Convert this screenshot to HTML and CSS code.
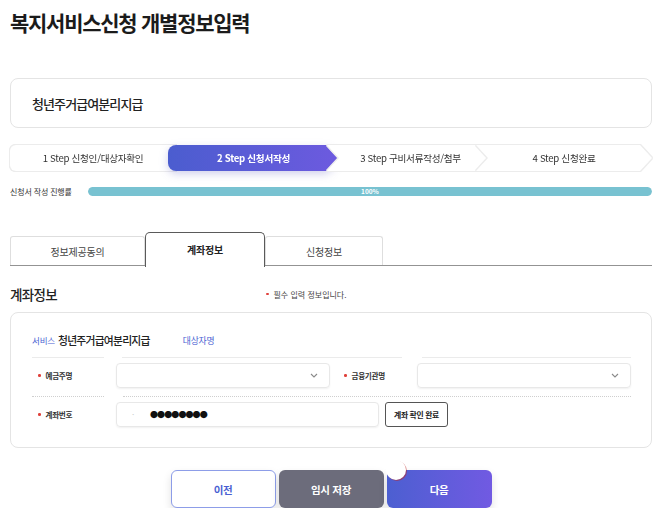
FILE: index.html
```html
<!DOCTYPE html>
<html lang="ko">
<head>
  <meta charset="UTF-8" />
  <meta name="viewport" content="width=device-width, initial-scale=1.0"/>
  <title>복지서비스신청 개별정보입력</title>
  <link rel="stylesheet" href="styles.css">
</head>
<body>

<div class="page">
  <h1 class="title">복지서비스신청 개별정보입력</h1>

  <div class="service-box">청년주거급여분리지급</div>

  <!-- Step indicator -->
  <ol class="steps">
    <li class="step step-first"><span>1 Step 신청인/대상자확인</span></li>
    <li class="step step-active"><span>2 Step 신청서작성</span></li>
    <li class="step step-mid"><span>3 Step 구비서류작성/첨부</span></li>
    <li class="step step-mid step-last"><span>4 Step 신청완료</span></li>
  </ol>

  <div class="progress">
    <span class="progress-label">신청서 작성 진행률</span>
    <div class="progress-bar">
      <div class="progress-fill" style="width: 100%">100%</div>
    </div>
  </div>

  <!-- Tabs -->
  <div class="tabs">
    <div class="tab">정보제공동의</div>
    <div class="tab active">계좌정보</div>
    <div class="tab">신청정보</div>
  </div>

  <div class="section-head">
    <h2>계좌정보</h2>
    <p class="note"><i class="dot"></i>필수 입력 정보입니다.</p>
  </div>

  <div class="card">
    <div class="svc-line">
      <span class="blue">서비스</span>
      <strong>청년주거급여분리지급</strong>
      <span class="blue target">대상자명</span>
    </div>

    <div class="rule">
      <span class="seg-a"></span><span class="seg-b"></span><span class="seg-c"></span>
    </div>

    <div class="form-row">
      <label class="field-label"><i class="dot"></i>예금주명</label>
      <div class="select">
        <svg width="8" height="5" viewBox="0 0 8 5"><polyline points="1,1 4,4 7,1" fill="none" stroke="#8a8a8a" stroke-width="1.1"/></svg>
      </div>
      <label class="field-label"><i class="dot"></i>금융기관명</label>
      <div class="select">
        <svg width="8" height="5" viewBox="0 0 8 5"><polyline points="1,1 4,4 7,1" fill="none" stroke="#8a8a8a" stroke-width="1.1"/></svg>
      </div>
    </div>

    <div class="rule dotted">
      <span class="seg-a"></span><span class="seg-d"></span>
    </div>

    <div class="form-row">
      <label class="field-label"><i class="dot"></i>계좌번호</label>
      <div class="input"><span class="mark">·</span><span class="secret">●●●●●●●●</span></div>
      <button class="btn-check">계좌 확인 완료</button>
    </div>
  </div>

  <div class="actions">
    <button class="btn btn-prev">이전</button>
    <button class="btn btn-save">임시 저장</button>
    <button class="btn btn-next">다음</button>
  </div>
</div>

</body>
</html>
```

FILE: styles.css
```css
:root {
  --text: #222;
  --sub: #444;
  --line: #e4e4e4;
  --blue: #4a5fd2;
  --purple: #705ae2;
  --red: #e0413b;
}

* {
  box-sizing: border-box;
}

body {
  margin: 0;
  background: #fff;
  color: var(--text);
  font-family: "Noto Sans CJK KR", "Noto Sans", sans-serif;
  letter-spacing: -0.04em;
}

.page {
  width: 663px;
  padding: 0 11px 0 10px;
}

.title {
  margin: 8px 0 0;
  font-size: 21px;
  line-height: 28px;
  font-weight: 700;
  letter-spacing: -0.06em;
  color: #1b1b1b;
}

.service-box {
  margin-top: 42px;
  height: 50px;
  border: 1px solid var(--line);
  border-radius: 8px;
  padding-left: 21px;
  display: flex;
  align-items: center;
  font-size: 13px;
  font-weight: 500;
  letter-spacing: -0.07em;
}

/* Steps */
.steps {
  display: flex;
  list-style: none;
  margin: 17px 0 0;
  padding: 0;
  height: 26px;
}

.step {
  flex: none;
  height: 26px;
  font-size: 9.6px;
  letter-spacing: -0.03em;
  color: #333;
  filter: drop-shadow(1px 0 0 #ececec) drop-shadow(-1px 0 0 #ececec) drop-shadow(0 1px 0 #ececec) drop-shadow(0 -1px 0 #ececec);
}

.step span {
  display: flex;
  align-items: center;
  justify-content: center;
  height: 100%;
  background: #fff;
  white-space: pre;
}

.step-first {
  width: 166px;
}

.step-first span {
  border-radius: 6px 0 0 6px;
}

.step-active {
  width: 171px;
  margin-left: -8px;
  color: #fff;
  font-weight: 700;
  filter: drop-shadow(0 3px 4px rgba(70, 70, 180, 0.25));
}

.step-active span {
  background: linear-gradient(90deg, #4b5dcf, #6d5adf);
  border-radius: 8px 0 0 8px;
  clip-path: polygon(0 0, calc(100% - 12px) 0, 100% 50%, calc(100% - 12px) 100%, 0 100%);
}

.step-mid {
  width: 161px;
  margin-left: -12px;
}

.step-mid span {
  padding: 0 12px 0 18px;
  clip-path: polygon(0 0, calc(100% - 12px) 0, 100% 50%, calc(100% - 12px) 100%, 0 100%, 12px 50%);
}

.step-last {
  width: 176px;
}

.step-last span {
  padding: 0 12px;
}

/* Progress */
.progress {
  display: flex;
  align-items: center;
  margin-top: 14px;
  height: 12px;
}

.progress-label {
  flex: 0 0 78px;
  font-size: 8px;
  letter-spacing: -0.02em;
  color: #333;
}

.progress-bar {
  flex: 1;
  height: 9px;
  border-radius: 5px;
  background: #e6eef0;
  overflow: hidden;
}

.progress-fill {
  height: 100%;
  border-radius: 5px;
  background: #78c2d1;
  color: #fff;
  font-size: 6.5px;
  font-weight: 700;
  line-height: 9px;
  text-align: center;
  letter-spacing: 0;
}

/* Tabs */
.tabs {
  display: flex;
  align-items: flex-end;
  margin-top: 36px;
  height: 33px;
  border-bottom: 1.5px solid #939393;
}

.tab {
  height: 29px;
  border: 1px solid #dedede;
  border-bottom: none;
  border-radius: 3px 3px 0 0;
  display: flex;
  align-items: center;
  justify-content: center;
  font-size: 10px;
  letter-spacing: -0.02em;
  color: #444;
}

.tab:first-child {
  width: 135px;
}

.tab.active {
  width: 120px;
  height: 34.5px;
  margin-bottom: -1.5px;
  border: 1px solid #5a5a5a;
  border-bottom: none;
  border-radius: 5px 5px 0 0;
  background: #fff;
  font-weight: 700;
  color: #222;
}

.tab:last-child {
  width: 118px;
}

/* Section head */
.section-head {
  display: flex;
  align-items: center;
  margin-top: 18px;
  height: 20px;
}

.section-head h2 {
  flex: 0 0 256px;
  margin: 0;
  font-size: 13.5px;
  font-weight: 500;
}

.note {
  margin: 0;
  font-size: 8px;
  letter-spacing: 0;
  color: #444;
  display: flex;
  align-items: center;
}

.dot {
  display: inline-block;
  flex: none;
  width: 2.5px;
  height: 2.5px;
  border-radius: 50%;
  background: var(--red);
  margin-right: 5px;
}

/* Card */
.card {
  margin-top: 8px;
  border: 1px solid var(--line);
  border-radius: 8px;
  padding: 20px 20px 20px 21px;
}

.svc-line {
  display: flex;
  align-items: center;
  height: 14px;
  font-size: 10.8px;
}

.svc-line .blue {
  color: var(--blue);
  font-size: 8.5px;
  letter-spacing: -0.02em;
  margin-right: 3px;
}

.svc-line strong {
  font-weight: 500;
  letter-spacing: -0.07em;
}

.svc-line .target {
  margin-left: 33px;
  font-size: 8.8px;
}

.rule {
  display: flex;
  margin-top: 10px;
  height: 1px;
}

.rule span {
  height: 0;
  border-top: 1.5px solid #ebebeb;
}

.seg-a { width: 72px; }
.seg-b { width: 280px; margin-left: 18px; }
.seg-c { width: 209px; margin-left: 20px; }
.seg-d { width: 508px; margin-left: 19px; }

.rule.dotted {
  margin-top: 8px;
}

.rule.dotted span {
  border-top: 1px dotted #cfcfcf;
}

.form-row {
  display: flex;
  align-items: center;
  margin-top: 5px;
  height: 25px;
}

.field-label {
  flex: 0 0 72px;
  padding-left: 6px;
  display: flex;
  align-items: center;
  font-size: 7.6px;
  font-weight: 700;
  letter-spacing: -0.04em;
  color: #333;
}

.field-label + .select,
.field-label + .input {
  margin-left: 12px;
}

.select + .field-label {
  margin-left: 8px;
}

.select {
  width: 214px;
  height: 25px;
  border: 1px solid #e8e8e8;
  border-radius: 4px;
  box-shadow: 0 1px 2px rgba(0, 0, 0, 0.06);
  display: flex;
  align-items: center;
  justify-content: flex-end;
  padding-right: 11px;
}

.form-row .select:last-child {
  margin-left: 7px;
}

.input {
  width: 263px;
  height: 25px;
  border: 1px solid #e8e8e8;
  border-radius: 4px;
  box-shadow: 0 1px 2px rgba(0, 0, 0, 0.06);
  display: flex;
  align-items: center;
  padding-left: 15px;
}

.mark {
  color: #c8c8c8;
  font-size: 8px;
  width: 18px;
}

.secret {
  font-size: 8px;
  letter-spacing: -0.9px;
  color: #111;
}

.btn-check {
  margin-left: 6px;
  width: 63px;
  height: 25px;
  border: 1.5px solid #555;
  border-radius: 3px;
  background: #fff;
  font-family: inherit;
  font-size: 7.8px;
  font-weight: 700;
  letter-spacing: -0.04em;
  color: #222;
  padding: 0;
}

/* Bottom actions */
.actions {
  display: flex;
  justify-content: center;
  gap: 3px;
  margin-top: 22px;
}

.btn {
  width: 105px;
  height: 38px;
  border-radius: 6px;
  font-family: inherit;
  font-size: 10.5px;
  font-weight: 700;
  letter-spacing: -0.03em;
  box-shadow: 0 4px 8px rgba(0, 0, 0, 0.12);
  cursor: pointer;
}

.btn-prev {
  background: #fff;
  border: 1.5px solid #8d9de8;
  color: var(--blue);
}

.btn-save {
  background: #6c6c7b;
  border: none;
  color: #fff;
}

.btn-next {
  position: relative;
  background: linear-gradient(90deg, #4c5fd1, #715ae2);
  border: none;
  color: #fff;
}

.btn-next::before {
  content: '';
  position: absolute;
  left: -1px;
  top: -10px;
  width: 20px;
  height: 20px;
  border-radius: 50%;
  background: #fff;
  box-shadow: 1px 1px 0 rgba(190, 40, 40, 0.55);
}
```
